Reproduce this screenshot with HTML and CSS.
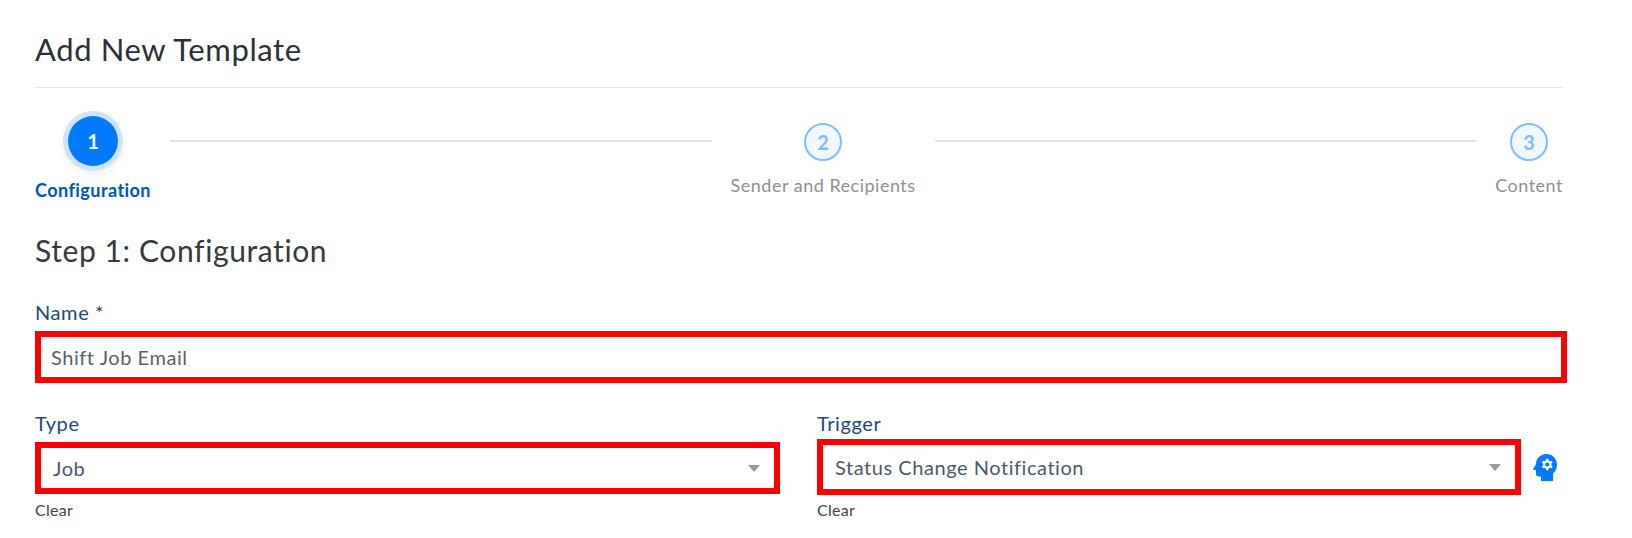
FILE: index.html
```html
<!DOCTYPE html>
<html lang="en">
<head>
    <meta charset="UTF-8">
    <meta name="viewport" content="width=device-width, initial-scale=1.0">
    <title>Add New Template</title>
    <link rel="stylesheet" href="styles.css">
</head>
<body>
    <div class="container">
        <h1 class="page-title">Add New Template</h1>

        <!-- Stepper -->
        <div class="stepper">
            <div class="step step-first active">
                <div class="step-circle">1</div>
                <div class="step-label">Configuration</div>
            </div>
            <div class="step-line"></div>
            <div class="step">
                <div class="step-circle">2</div>
                <div class="step-label">Sender and Recipients</div>
            </div>
            <div class="step-line"></div>
            <div class="step">
                <div class="step-circle">3</div>
                <div class="step-label">Content</div>
            </div>
        </div>

        <h2 class="step-title">Step 1: Configuration</h2>

        <label class="field-label">Name *</label>
        <div class="box name-box">Shift Job Email</div>

        <div class="form-row">
            <div class="col-type">
                <label class="field-label">Type</label>
                <div class="box select-box type-box">
                    <span>Job</span>
                    <span class="caret"></span>
                </div>
                <div class="clear">Clear</div>
            </div>
            <div class="col-trigger">
                <label class="field-label">Trigger</label>
                <div class="trigger-row">
                    <div class="box select-box trigger-box">
                        <span>Status Change Notification</span>
                        <span class="caret"></span>
                    </div>
                    <svg class="head-icon" viewBox="0 0 24 27" width="24" height="27">
                        <path fill="#007bff" d="M13.5 0C7.6 0 3.2 4.3 3 9.6 2.9 11 1.3 13 .4 14.6c-.4.8.1 1.5 1 1.5H3v4c0 1.3 1 2.3 2.3 2.3H8V27h12v-7.6c2.5-2 4-5 4-8.4C24 4.9 19.5 0 13.5 0z"/>
                        <circle cx="14.2" cy="10.5" r="3.2" fill="none" stroke="#fff" stroke-width="2.2"/>
                        <path stroke="#fff" stroke-width="2.4" d="M14.2 4.800v2.700M14.2 13.500v2.700M9.300 7.700l2.300 1.300M16.800 12l2.300 1.300M9.300 13.300l2.300-1.300M16.800 9l2.300-1.300"/>
                    </svg>
                </div>
                <div class="clear clear-trigger">Clear</div>
            </div>
        </div>
    </div>
</body>
</html>
```
FILE: styles.css
```css
/* Basic styling */
body {
    font-family: Lato, "Open Sans", sans-serif;
    margin: 0;
    padding: 0;
    background-color: #fff;
    color: #2b3035;
}

.container {
    width: 1528px;
    padding: 0 0 0 35px;
}

.page-title {
    font-size: 31px;
    font-weight: 400;
    line-height: 36px;
    letter-spacing: 0.6px;
    margin: 0;
    padding: 31px 0 20px;
    border-bottom: 1px solid #e2e4e6;
}

/* Stepper */
.stepper {
    display: flex;
    gap: 19px;
    align-items: flex-start;
    padding-top: 23px;
}

.step {
    display: flex;
    flex-direction: column;
    align-items: center;
    padding-top: 12px;
}

.step-first {
    padding-top: 0;
}

.step-circle {
    width: 34px;
    height: 34px;
    border: 2px solid #80bdff;
    border-radius: 50%;
    background-color: #f0f7ff;
    color: #80bdff;
    font-size: 20px;
    font-weight: 700;
    line-height: 34px;
    text-align: center;
}

.step-label {
    font-size: 18px;
    line-height: 22px;
    letter-spacing: 0.5px;
    color: #8f8f8f;
    margin-top: 13px;
    white-space: nowrap;
}

.active .step-circle {
    width: 50px;
    height: 50px;
    border: 0;
    margin-top: 5px;
    background-color: #007bff;
    color: #fff;
    line-height: 50px;
    box-shadow: 0 0 0 5px #cfe3fb, 0 3px 10px 5px rgba(0, 0, 0, 0.06);
}

.active .step-label {
    color: #0056b3;
    font-weight: 700;
    letter-spacing: 0.45px;
    margin-top: 13px;
}

.step-line {
    flex: 1;
    height: 2px;
    margin-top: 29px;
    background-color: #dee2e6;
}

.step-title {
    font-size: 30px;
    font-weight: 400;
    line-height: 36px;
    letter-spacing: 0.6px;
    color: #343a40;
    margin: 31px 0 33px;
}

/* Form */
.field-label {
    display: block;
    font-size: 20px;
    line-height: 22px;
    letter-spacing: 0.6px;
    color: #1d4a7a;
}

.box {
    box-sizing: border-box;
    height: 52px;
    border: 6px solid #f00;
    font-size: 20px;
    line-height: 40px;
    letter-spacing: 0.55px;
    color: #5b6168;
    background-color: #fff;
}

.name-box {
    width: 1532px;
    margin-top: 8px;
    padding-left: 10px;
}

.form-row {
    display: flex;
    margin-top: 29px;
}

.col-type {
    flex: none;
    width: 745px;
    margin-right: 37px;
}

.col-trigger {
    flex: none;
    width: 740px;
}

.col-type .box {
    margin-top: 8px;
}

.trigger-row {
    display: flex;
    align-items: center;
    margin-top: 5px;
    gap: 12px;
}

.select-box {
    display: flex;
    justify-content: space-between;
    align-items: center;
    padding: 0 14px 0 12px;
    color: #495a6e;
}

.trigger-box {
    width: 704px;
    height: 56px;
}

.caret {
    width: 0;
    height: 0;
    border-left: 6px solid transparent;
    border-right: 6px solid transparent;
    border-top: 7px solid #999;
}

.clear {
    font-size: 16px;
    line-height: 18px;
    letter-spacing: 0.3px;
    color: #444;
    margin-top: 7px;
}

.clear-trigger {
    margin-top: 6px;
}
```
